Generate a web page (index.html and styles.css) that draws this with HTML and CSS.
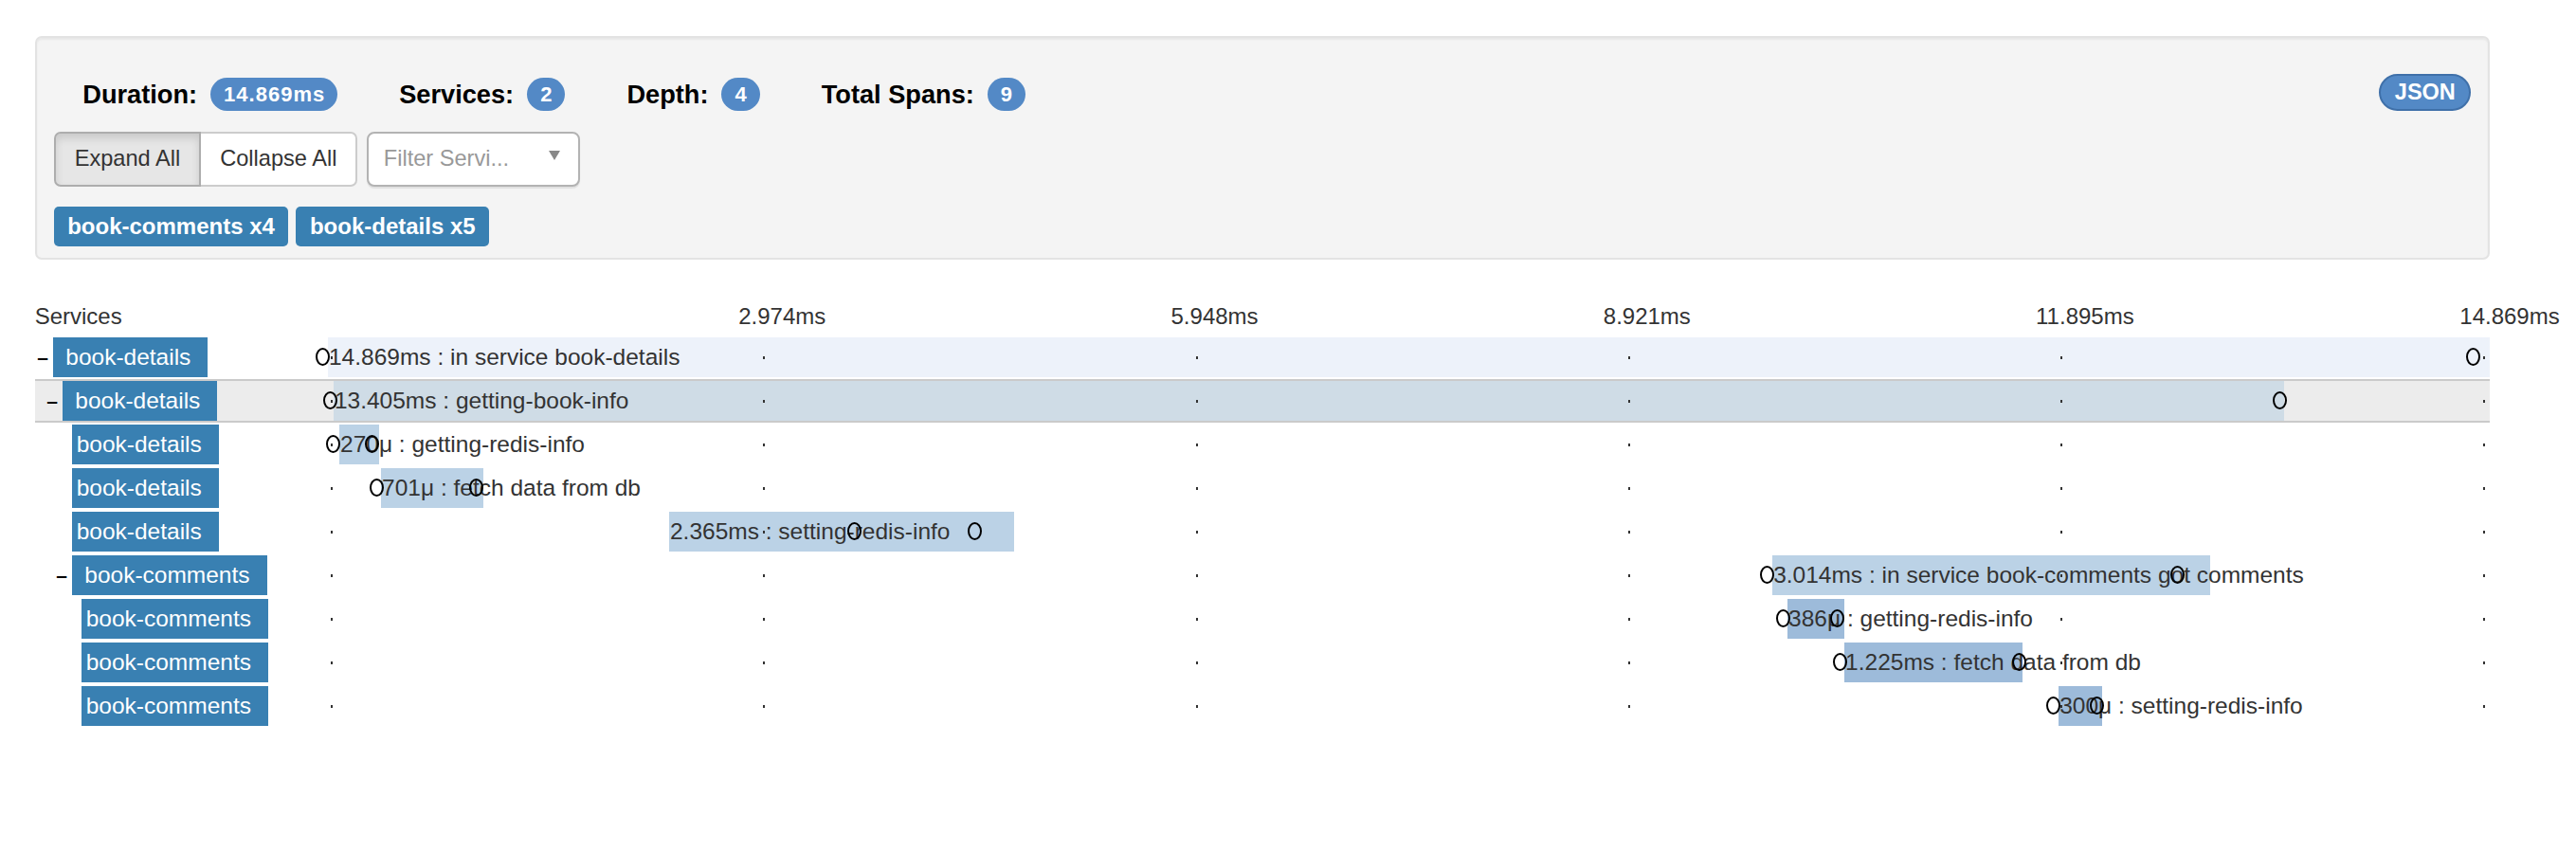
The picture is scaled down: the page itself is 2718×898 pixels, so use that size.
FILE: index.html
```html
<!DOCTYPE html>
<html>
<head>
<meta charset="utf-8">
<title>Trace</title>
<link rel="stylesheet" href="styles.css">
</head>
<body>
<div class="page">
  <div class="well">
    <div class="summary">
      <ul class="stats">
        <li class="stat"><strong class="stat-label">Duration:</strong><span class="badge">14.869ms</span></li>
        <li class="stat"><strong class="stat-label">Services:</strong><span class="badge">2</span></li>
        <li class="stat"><strong class="stat-label">Depth:</strong><span class="badge">4</span></li>
        <li class="stat"><strong class="stat-label">Total Spans:</strong><span class="badge">9</span></li>
      </ul>
      <button class="json">JSON</button>
    </div>
    <div class="controls">
      <div class="btn-group">
        <button class="btn active">Expand All</button>
        <button class="btn">Collapse All</button>
      </div>
      <div class="select">
        <span class="placeholder">Filter Servi...</span>
        <svg class="caret" width="12" height="10" viewBox="0 0 12 10"><polygon points="0,0 12,0 6,10" fill="#888"/></svg>
      </div>
    </div>
    <div class="tags">
      <span class="tag">book-comments x4</span>
      <span class="tag">book-details x5</span>
    </div>
  </div>

  <div class="trace">
    <div class="head">
      <div class="svc-head">Services</div>
      <div class="axis">
        <span class="mark m1">2.974ms</span>
        <span class="mark m2">5.948ms</span>
        <span class="mark m3">8.921ms</span>
        <span class="mark m4">11.895ms</span>
        <span class="mark m5">14.869ms</span>
      </div>
    </div>

    <div class="row">
      <div class="svc d0"><span class="exp">–</span><span class="name">book-details</span></div>
      <div class="tl">
        <div class="bar c1" style="left:0%;width:100%"><span>14.869ms : in service book-details</span></div>
        <i class="dot k0"></i><i class="dot k1"></i><i class="dot k2"></i><i class="dot k3"></i><i class="dot k4"></i><i class="dot k5"></i>
        <i class="ann" style="left:-0.22%"></i><i class="ann" style="left:99.21%"></i>
      </div>
    </div>

    <div class="row sel">
      <div class="svc d1"><span class="exp">–</span><span class="name">book-details</span></div>
      <div class="tl">
        <div class="bar c2" style="left:0.26%;width:90.2%"><span>13.405ms : getting-book-info</span></div>
        <i class="dot k0"></i><i class="dot k1"></i><i class="dot k2"></i><i class="dot k3"></i><i class="dot k4"></i><i class="dot k5"></i>
        <i class="ann" style="left:0.13%"></i><i class="ann" style="left:90.27%"></i>
      </div>
    </div>

    <div class="row">
      <div class="svc d2 leaf"><span class="exp"></span><span class="name">book-details</span></div>
      <div class="tl">
        <div class="bar c3" style="left:0.53%;width:1.84%"><span>270μ : getting-redis-info</span></div>
        <i class="dot k0"></i><i class="dot k1"></i><i class="dot k2"></i><i class="dot k3"></i><i class="dot k4"></i><i class="dot k5"></i>
        <i class="ann" style="left:0.24%"></i><i class="ann" style="left:2.06%"></i>
      </div>
    </div>

    <div class="row">
      <div class="svc d2 leaf"><span class="exp"></span><span class="name">book-details</span></div>
      <div class="tl">
        <div class="bar c3" style="left:2.46%;width:4.73%"><span>701μ : fetch data from db</span></div>
        <i class="dot k0"></i><i class="dot k1"></i><i class="dot k2"></i><i class="dot k3"></i><i class="dot k4"></i><i class="dot k5"></i>
        <i class="ann" style="left:2.28%"></i><i class="ann" style="left:6.88%"></i>
      </div>
    </div>

    <div class="row">
      <div class="svc d2 leaf"><span class="exp"></span><span class="name">book-details</span></div>
      <div class="tl">
        <div class="bar c3" style="left:15.78%;width:15.96%"><span>2.365ms : setting-redis-info</span></div>
        <i class="dot k0"></i><i class="dot k1"></i><i class="dot k2"></i><i class="dot k3"></i><i class="dot k4"></i><i class="dot k5"></i>
        <i class="ann" style="left:24.33%"></i><i class="ann" style="left:29.90%"></i>
      </div>
    </div>

    <div class="row">
      <div class="svc d2"><span class="exp">–</span><span class="name">book-comments</span></div>
      <div class="tl">
        <div class="bar c3" style="left:66.81%;width:20.25%"><span>3.014ms : in service book-comments got comments</span></div>
        <i class="dot k0"></i><i class="dot k1"></i><i class="dot k2"></i><i class="dot k3"></i><i class="dot k4"></i><i class="dot k5"></i>
        <i class="ann" style="left:66.55%"></i><i class="ann" style="left:85.53%"></i>
      </div>
    </div>

    <div class="row">
      <div class="svc d3 leaf"><span class="exp"></span><span class="name">book-comments</span></div>
      <div class="tl">
        <div class="bar c4" style="left:67.51%;width:2.63%"><span>386μ : getting-redis-info</span></div>
        <i class="dot k0"></i><i class="dot k1"></i><i class="dot k2"></i><i class="dot k3"></i><i class="dot k4"></i><i class="dot k5"></i>
        <i class="ann" style="left:67.30%"></i><i class="ann" style="left:69.79%"></i>
      </div>
    </div>

    <div class="row">
      <div class="svc d3 leaf"><span class="exp"></span><span class="name">book-comments</span></div>
      <div class="tl">
        <div class="bar c4" style="left:70.14%;width:8.24%"><span>1.225ms : fetch data from db</span></div>
        <i class="dot k0"></i><i class="dot k1"></i><i class="dot k2"></i><i class="dot k3"></i><i class="dot k4"></i><i class="dot k5"></i>
        <i class="ann" style="left:69.93%"></i><i class="ann" style="left:78.21%"></i>
      </div>
    </div>

    <div class="row">
      <div class="svc d3 leaf"><span class="exp"></span><span class="name">book-comments</span></div>
      <div class="tl">
        <div class="bar c4" style="left:80.05%;width:2.02%"><span>300μ : setting-redis-info</span></div>
        <i class="dot k0"></i><i class="dot k1"></i><i class="dot k2"></i><i class="dot k3"></i><i class="dot k4"></i><i class="dot k5"></i>
        <i class="ann" style="left:79.79%"></i><i class="ann" style="left:81.81%"></i>
      </div>
    </div>
  </div>
</div>
</body>
</html>
```

FILE: styles.css
```css
* { box-sizing: border-box; margin: 0; padding: 0; }
html, body { background: #fff; }
body {
  font-family: "Liberation Sans", Arial, Helvetica, sans-serif;
  font-size: 24px;
  color: #333;
}
button { font: inherit; cursor: pointer; }

.page { padding: 38.3px 90.7px 0 36.7px; }

/* summary well */
.well {
  background: #f4f4f4;
  border: 2px solid #e3e3e3;
  border-radius: 7px;
  box-shadow: inset 0 2px 2px rgba(0, 0, 0, 0.05);
  padding: 38px 18px 12.3px 18px;
}
.summary {
  display: flex;
  justify-content: space-between;
  align-items: flex-start;
  height: 39px;
}
.stats {
  display: flex;
  list-style: none;
  margin: 4px 0 0 30.6px;
  gap: 65px;
}
.stat { display: flex; align-items: center; height: 35px; }
.stat-label {
  font-weight: bold;
  font-size: 27.2px;
  color: #000;
  margin-right: 14px;
}
.badge {
  display: inline-flex;
  align-items: center;
  height: 35px;
  padding: 0 13px 0 14px;
  border-radius: 18px;
  background: #5389c6;
  color: #fff;
  font-weight: bold;
  font-size: 22px;
  letter-spacing: 1px;
}
.json {
  height: 39px;
  padding: 0 14.5px;
  border: 2px solid #3f70a9;
  border-radius: 20px;
  background: #5389c6;
  color: #fff;
  font-weight: bold;
  font-size: 23.5px;
}

.controls { display: flex; gap: 10px; margin-top: 21.4px; }
.btn-group { display: flex; }
.btn {
  height: 58.3px;
  padding: 0 20px;
  border: 2px solid #ccc;
  background: #fff;
  color: #333;
  font-size: 23.6px;
}
.btn:first-child { border-radius: 7px 0 0 7px; }
.btn:last-child { border-radius: 0 7px 7px 0; border-left: none; }
.btn.active {
  background: #e6e6e6;
  border-color: #adadad;
  box-shadow: inset 0 5px 9px rgba(0, 0, 0, 0.125);
}
.select {
  width: 224.6px;
  height: 58.3px;
  border: 2px solid #b3b3b3;
  border-radius: 8px;
  background: #fff;
  box-shadow: 0 2px 1px rgba(0, 0, 0, 0.08);
  display: flex;
  align-items: center;
  justify-content: space-between;
  padding: 0 19.3px 0 15.3px;
}
.placeholder {
  white-space: nowrap;
  color: #999;
  font-size: 23.6px;
}
.caret { margin-bottom: 7px; }

.tags { display: flex; gap: 8px; margin-top: 21.3px; }
.tag {
  height: 41.7px;
  line-height: 41.7px;
  padding: 0 14.5px;
  background: #3980b2;
  color: #fff;
  font-weight: bold;
  font-size: 24px;
  border-radius: 5px;
}

/* trace table */
.trace { margin-top: 39.3px; }
.head { display: flex; height: 40px; line-height: 40px; }
.svc-head { width: 309.3px; }
.axis { flex: 1; position: relative; }
.mark { position: absolute; top: 0; white-space: nowrap; }
.m1 { left: calc(20% - 23px); }
.m2 { left: calc(40% - 23px); }
.m3 { left: calc(60% - 23px); }
.m4 { left: calc(80% - 23px); }
.m5 { left: calc(100% - 32px); }

.row {
  display: flex;
  height: 46px;
  border-top: 2px solid transparent;
  border-bottom: 2px solid transparent;
}
.row.sel { background: #ececec; border-color: #cacaca; }

.svc { width: 309.3px; display: flex; }
.d0 { padding-left: 2.6px; }
.d1 { padding-left: 12.6px; }
.d2 { padding-left: 22.6px; }
.d3 { padding-left: 32.6px; }
.exp {
  width: 16.7px;
  font-weight: bold;
  font-size: 21px;
  line-height: 42px;
  color: #000;
}
.name {
  background: #3980b2;
  color: #fff;
  line-height: 42px;
  padding: 0 18px 0 13.3px;
  font-size: 24.5px;
  white-space: nowrap;
}
.leaf .name { padding-left: 4.7px; }

.tl { flex: 1; position: relative; }
.bar {
  position: absolute;
  top: 0;
  height: 42px;
  line-height: 42px;
  white-space: nowrap;
  padding-left: 1px;
  font-size: 24.5px;
  color: #333;
}
.c1 { background: #edf2fa; }
.c2 { background: #cfdce6; }
.c3 { background: #bbd2e6; }
.c4 { background: #9dbbda; }

.dot {
  position: absolute;
  top: 20px;
  width: 2px;
  height: 3px;
  background: #333;
}
.k0 { left: 3px; }
.k1 { left: calc(20% + 3px); }
.k2 { left: calc(40% + 3px); }
.k3 { left: calc(60% + 3px); }
.k4 { left: calc(80% + 3px); }
.k5 { left: calc(100% - 7px); }

.ann {
  position: absolute;
  top: 11.5px;
  width: 15px;
  height: 19px;
  margin-left: -7.5px;
  border: 2px solid #000;
  border-radius: 50%;
}
```
